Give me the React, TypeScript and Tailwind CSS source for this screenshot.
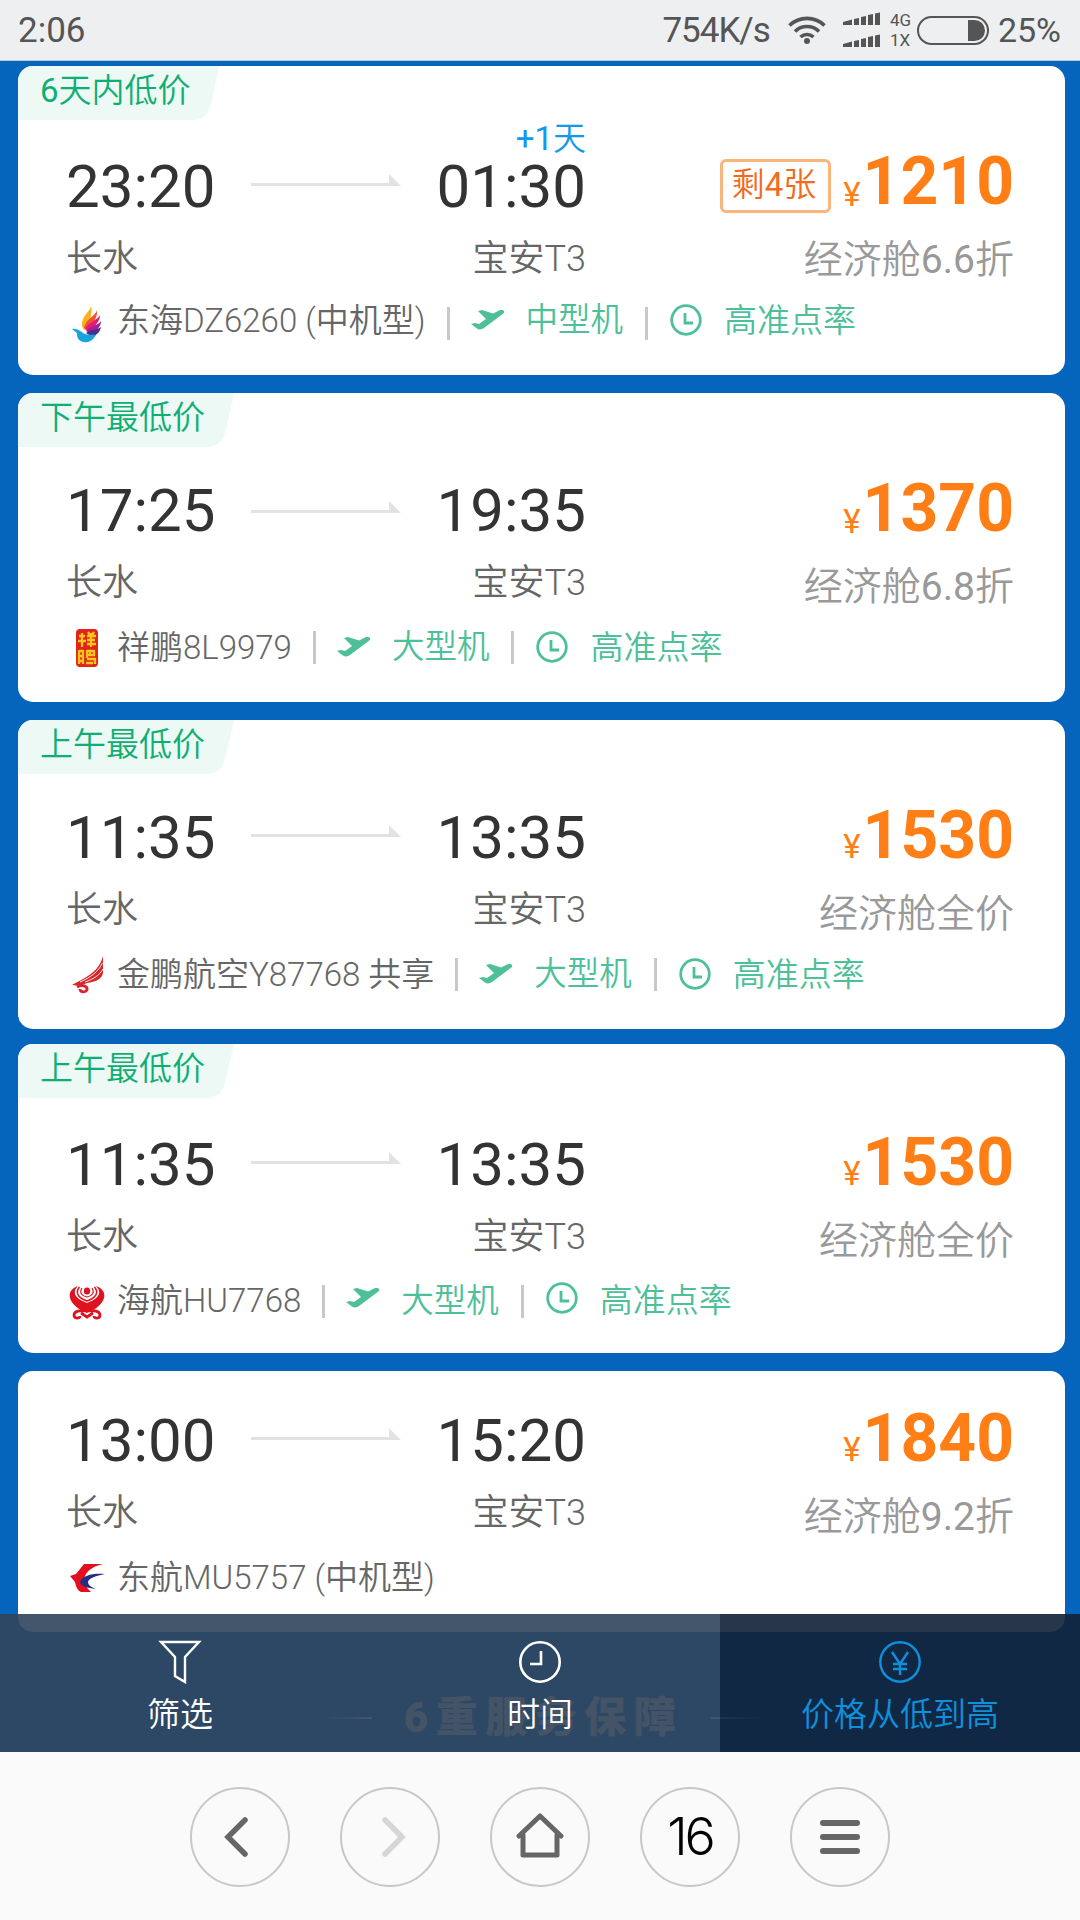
import type { ReactNode } from "react";

type Flight = {
    tag?: string;
    tagWidth?: string;
    depart: string;
    arrive: string;
    nextDay?: boolean;
    left?: string;
    price: string;
    cabin: string;
    flight: string;
    plane?: string;
    logo: ReactNode;
    frame: string;
    body: string;
    timePad: string;
    arrowPad: string;
    pricePad: string;
    yenPad: string;
    textPad: string;
    markPad: string;
};

const DonghaiLogo = () => (
    <svg width="36" height="40" viewBox="0 0 36 40">
        <path d="M22 2c-1 6-10 10-9 20 1 4 4 5 7 3C20 16 24 8 22 2z" fill="#fbb21c" />
        <path d="M28 6c-1 6-12 9-13 18l6 3c2-8 8-13 7-21z" fill="#f0532d" />
        <path d="M31 11c-2 5-13 8-15 14l6 3c2-6 9-9 9-17z" fill="#e5197f" />
        <path d="M32 17c-3 5-12 5-15 10l6 3c3-4 9-6 9-13z" fill="#a81e8c" />
        <path d="M32 23c-4 3-10 2-15 6l6 4c4-2 8-4 9-10z" fill="#4c2d90" />
        <path d="M3 25c5-1 8 2 11 4 6 3 9 1 13 2-3 5-7 8-12 7-7-1-7-6-7-9z" fill="#17a4dc" />
    </svg>
);

const XiangpengLogo = () => (
    <svg width="36" height="40" viewBox="0 0 36 40">
        <rect x="7" y="1" width="22" height="38" rx="4" fill="#e22319" />
        <g stroke="#ffc71c" strokeWidth="2.300" fill="none">
            <path d="M10 8h6M13 5v14M9 13h8M18 8h9M18 12h8M18 16h9M22 5v14M19 4l2 3M25 4l-2 3" />
            <path d="M10 22v14M14 22v14M10 23h4M10 28h5M10 33h5M18 22v8M25 22v6M18 23h7M18 27h8M18 31h8v5M17 35h7M21 22v4" />
        </g>
    </svg>
);

const JinpengLogo = () => (
    <svg width="36" height="40" viewBox="0 0 36 40">
        <path d="M34 1C30 16 20 21 3 30c6 1 11 0 15-2 8-1 16-4 16-11z" fill="#d9262c" />
        <path d="M33.500 8C29 17 22 22 11 27M34 14c-4 7-10 10-18 13" stroke="#fff" strokeWidth="0.900" fill="none" />
        <path d="M8 32c5-3 11-1 10 3-2 3-7 2-7-1" stroke="#d9262c" strokeWidth="2.800" fill="none" />
    </svg>
);

const HainanLogo = () => (
    <svg width="36" height="40" viewBox="0 0 36 40">
        <path d="M9 4C-5 9-1 23 18 31 37 23 41 9 27 4c7 7 2 13-9 17C7 17 2 11 9 4z" fill="#df1220" />
        <g fill="none" stroke="#df1220">
            <path d="M10.500 5c-5 6-1 11 7.500 14 8.500-3 12.500-8 7.500-14" strokeWidth="1.500" />
            <path d="M13 6c-3 5 0 8 5 9 5-1 8-4 5-9" strokeWidth="1.200" />
            <path d="M16 29c-4-1-11 0-11 4 0 4 6 4 6 1M20 29c4-1 11 0 11 4 0 4-6 4-6 1M12 31l6 4 6-4" strokeWidth="2.800" />
        </g>
        <ellipse cx="18" cy="9" rx="3.200" ry="3.600" fill="#df1220" />
    </svg>
);

const EasternLogo = () => (
    <svg width="36" height="40" viewBox="0 0 36 40">
        <path d="M15 6h19c-8 2-15 5-18 12-2 5 0 11 6 16H12c-4-2-5-6-6-10L1 18l6-2z" fill="#e2101c" />
        <path d="M36 16c-12-1-22 1-25 8 1 4 7 6 16 7-5-2-8-4-8-7 1-4 8-6 17-8z" fill="#262c86" />
    </svg>
);

const flights: Flight[] = [
    {
        tag: "6天内低价", tagWidth: "w-[201px]", depart: "23:20", arrive: "01:30", nextDay: true, left: "剩4张",
        price: "1210", cabin: "经济舱6.6折", flight: "东海DZ6260 (中机型)", plane: "中型机", logo: <DonghaiLogo />,
        frame: "h-[309px] mb-[18px]", body: "h-[168px]", timePad: "pt-[31px]", arrowPad: "-mt-[14px]",
        pricePad: "pt-[26px]", yenPad: "mt-[26px]", textPad: "mt-[1px]", markPad: "mt-[7px]",
    },
    {
        tag: "下午最低价", tagWidth: "w-[216px]", depart: "17:25", arrive: "19:35",
        price: "1370", cabin: "经济舱6.8折", flight: "祥鹏8L9979", plane: "大型机", logo: <XiangpengLogo />,
        frame: "h-[309px] mb-[18px]", body: "h-[168px]", timePad: "pt-[28px]", arrowPad: "-mt-[8px]",
        pricePad: "pt-[26px]", yenPad: "mt-[26px]", textPad: "mt-[1px]", markPad: "mt-[1px]",
    },
    {
        tag: "上午最低价", tagWidth: "w-[216px]", depart: "11:35", arrive: "13:35",
        price: "1530", cabin: "经济舱全价", flight: "金鹏航空Y87768 共享", plane: "大型机", logo: <JinpengLogo />,
        frame: "h-[309px] mb-[15px]", body: "h-[168px]", timePad: "pt-[28px]", arrowPad: "-mt-[14px]",
        pricePad: "pt-[26px]", yenPad: "mt-[22px]", textPad: "mt-[1px]", markPad: "mt-[1px]",
    },
    {
        tag: "上午最低价", tagWidth: "w-[216px]", depart: "11:35", arrive: "13:35",
        price: "1530", cabin: "经济舱全价", flight: "海航HU7768", plane: "大型机", logo: <HainanLogo />,
        frame: "h-[309px] mb-[18px]", body: "h-[168px]", timePad: "pt-[31px]", arrowPad: "-mt-[14px]",
        pricePad: "pt-[29px]", yenPad: "mt-[22px]", textPad: "mt-[6px]", markPad: "mt-[7px]",
    },
    {
        depart: "13:00", arrive: "15:20",
        price: "1840", cabin: "经济舱9.2折", flight: "东航MU5757 (中机型)", logo: <EasternLogo />,
        frame: "h-[261px]", body: "h-[174px]", timePad: "pt-[34px]", arrowPad: "-mt-[14px]",
        pricePad: "pt-[32px]", yenPad: "mt-[22px]", textPad: "mt-[1px]", markPad: "mt-[1px]",
    },
];

// digits keep the regular weight next to the thinner Chinese text
const Mixed = ({ text }: { text: string }) => (
    <span className="font-[350]">
        {text.split(/([\d.+]+)/).map((part, i) => (
            i % 2 ? <span key={i} className="font-normal">{part}</span> : part
        ))}
    </span>
);

const Clock = () => (
    <svg width="32" height="32" viewBox="0 0 32 32" fill="none" stroke="#4dbf99" strokeWidth="2.800">
        <circle cx="16" cy="16" r="14.300" />
        <path d="M15 9v10h8" />
    </svg>
);

const Plane = () => (
    <svg width="34" height="20" viewBox="0 0 34 20" fill="#4dbf99">
        <path d="M7 1l4-1 11 3.500 6-3c3-1.500 6 0 5 2.500L13 18c-2 1.500-5 2-7 .5L0 14l4-1 4 1 7-5z" />
    </svg>
);

const Divider = () => <span className="block h-[33px] w-[3px] bg-[#c8c8c8]" />;

function FlightCard({ item }: { item: Flight }) {
    return (
        <div className={`relative overflow-hidden rounded-[15px] bg-white ${item.frame}`}>
            {item.tag && (
                <div className={`relative h-[54px] ${item.tagWidth}`}>
                    <svg className="absolute inset-0 h-full w-full" viewBox="0 0 216 54" preserveAspectRatio="none">
                        <path d="M0 0h216l-9 39q-4 15-19 15H0z" fill="#ecf9f5" />
                    </svg>
                    <span className="relative block pl-[22px] text-[33px] leading-[50px] text-[#0fae72]">
                        <Mixed text={item.tag} />
                    </span>
                </div>
            )}

            <div className={`flex justify-between pr-[51px] pl-[48px] ${item.body}`}>
                <div className={`w-[520px] ${item.timePad}`}>
                    <div className="relative flex h-[72px] items-center justify-between text-[60px] leading-[72px] text-[#333]">
                        {item.nextDay && (
                            <span className="absolute -top-[30px] right-0 text-[33px] leading-[36px] text-[#1299ec]">
                                <Mixed text="+1天" />
                            </span>
                        )}
                        <span>{item.depart}</span>
                        <svg width="150" height="12" viewBox="0 0 150 12" fill="#e2e2e2" className={item.arrowPad}>
                            <path d="M0 9h138V0l12 12H0z" />
                        </svg>
                        <span>{item.arrive}</span>
                    </div>
                    <div className="flex justify-between pt-[14px] text-[36px] leading-[44px] font-[350] text-[#666]">
                        <span>长水</span>
                        <span>宝安T3</span>
                    </div>
                </div>

                <div className={`text-right ${item.pricePad}`}>
                    <div className="flex h-[72px] items-center justify-end">
                        {item.left && (
                            <span className="mt-[8px] mr-[12px] h-[54px] rounded-[6px] border-3 border-[#f9b57c] pr-[12px] pl-[9px] text-[33px] leading-[46px] text-[#f26a1b]">
                                <Mixed text={item.left} />
                            </span>
                        )}
                        <span className={`mr-[2px] text-[33px] leading-[40px] text-[#ff7e15] ${item.yenPad}`}>¥</span>
                        <span className="text-[66px] leading-[72px] font-bold text-[#ff7e15]">{item.price}</span>
                    </div>
                    <div className="pt-[18px] text-[39px] leading-[48px] text-[#999]">
                        <Mixed text={item.cabin} />
                    </div>
                </div>
            </div>

            <div className="flex h-[64px] items-center pl-[51px] text-[33px] text-[#4dbf99]">
                <span className={item.markPad}>{item.logo}</span>
                <span className={`ml-[12px] font-[350] text-[#666] ${item.textPad}`}>{item.flight}</span>
                {item.plane && (
                    <div className="flex items-center pl-[21px]">
                        <span className={item.markPad}><Divider /></span>
                        <span className="mr-[21px] ml-[21px]"><Plane /></span>
                        <span className={`text-[32.500px] font-[350] ${item.textPad}`}>{item.plane}</span>
                        <span className={`mr-[22px] ml-[22px] ${item.markPad}`}><Divider /></span>
                        <Clock />
                        <span className={`ml-[22px] font-[350] ${item.textPad}`}>高准点率</span>
                    </div>
                )}
            </div>
        </div>
    );
}

function StatusBar() {
    return (
        <header className="flex h-[61px] items-center justify-between border-b border-[#b9c8dc] bg-[#edeff1] pr-[19px] pl-[18px] text-[34px] text-[#555]">
            <span className="pt-[2px] text-[35px]">2:06</span>
            <div className="flex items-center">
                <span className="pt-[2px] text-[35px] tracking-[-1px]">754K/s</span>
                <svg className="ml-[18px]" width="38" height="28" viewBox="0 0 38 28" fill="none" stroke="#555" strokeWidth="3.600">
                    <path d="M1.500 9.500a25 25 0 0 1 35 0M7 15.500a17 17 0 0 1 24 0M12.500 21a9.500 9.500 0 0 1 13 0" />
                    <circle cx="19" cy="25" r="3" fill="#555" stroke="none" />
                </svg>
                <svg className="ml-[17px]" width="38" height="36" viewBox="0 0 38 36" fill="#555">
                    <path d="M0 10l9-2.500V13H0zM11 7l5-1v7h-5zM18 5l5-1v9h-5zM25 3l5-1v11h-5zM32 1.500l5-1V13h-5z" />
                    <path d="M0 32l9-2.500V35H0zM11 29l5-1v7h-5zM18 27l5-1v9h-5zM25 25l5-1v11h-5zM32 23.500l5-1V35h-5z" />
                </svg>
                <div className="ml-[9px] w-[22px] text-[17px] leading-[20px]">
                    <div>4G</div>
                    <div>1X</div>
                </div>
                <div className="ml-[5px] flex h-[29px] w-[72px] justify-end rounded-full border-2 border-[#555] p-[2px]">
                    <span className="h-full w-[17px] rounded-r-full bg-[#555]" />
                </div>
                <span className="ml-[9px]">25%</span>
            </div>
        </header>
    );
}

function FilterBar() {
    return (
        <div className="absolute inset-x-0 top-[1614px] grid h-[138px] grid-cols-[1fr_1fr_1fr] text-center text-[33px] leading-[40px] text-white">
            <div className="flex flex-col items-center bg-[#31455c]/91 pt-[26px]">
                <svg width="44" height="44" viewBox="0 0 44 44" fill="none" stroke="currentColor" strokeWidth="2.400">
                    <path d="M3 2h38L27 17v25l-10-6V17z" />
                </svg>
                <span className="mt-[11px] font-[350]">筛选</span>
            </div>
            <div className="flex flex-col items-center bg-[#31455c]/91 pt-[26px]">
                <svg width="44" height="44" viewBox="0 0 44 44" fill="none" stroke="currentColor" strokeWidth="2.600">
                    <circle cx="22" cy="22" r="19.700" />
                    <path d="M23 11v13H12" />
                </svg>
                <span className="mt-[11px] font-[350]">时间</span>
            </div>
            <div className="flex flex-col items-center bg-[#132238]/91 pt-[26px] text-[#1090dc]">
                <svg width="44" height="44" viewBox="0 0 44 44" fill="none" stroke="currentColor" strokeWidth="2.400">
                    <circle cx="22" cy="22" r="19.700" />
                    <path d="M14 12l8 12 8-12M22 24v11M15 24h14M15 29h14" />
                </svg>
                <span className="mt-[11px] font-[350]">价格从低到高</span>
            </div>
        </div>
    );
}

const NavButton = ({ children }: { children: ReactNode }) => (
    <button className="flex h-[100px] w-[100px] items-center justify-center rounded-full border-2 border-[#c8c8c8]">
        {children}
    </button>
);

function BrowserNav() {
    return (
        <nav className="flex h-[168px] justify-center gap-[50px] bg-[#fafafa] pt-[35px]">
            <NavButton>
                <svg width="48" height="48" viewBox="0 0 48 48" fill="none" stroke="#666" strokeWidth="5.500" strokeLinecap="round">
                    <path d="M29 7L12 24l17 17" />
                </svg>
            </NavButton>
            <NavButton>
                <svg width="48" height="48" viewBox="0 0 48 48" fill="none" stroke="#d6d6d6" strokeWidth="5.500" strokeLinecap="round">
                    <path d="M19 7l17 17-17 17" />
                </svg>
            </NavButton>
            <NavButton>
                <svg width="48" height="48" viewBox="0 0 48 48" fill="none" stroke="#666" strokeWidth="5" strokeLinecap="round" strokeLinejoin="round">
                    <path d="M3 23L24 3l21 20M7 22v20h34V22" />
                </svg>
            </NavButton>
            <NavButton>
                <span className="pb-[1px] font-['Inter'] text-[52px] font-[350] tracking-[-3px] text-black">16</span>
            </NavButton>
            <NavButton>
                <svg width="48" height="48" viewBox="0 0 48 48" stroke="#666" strokeWidth="6" strokeLinecap="round">
                    <path d="M7 10h34M7 24h34M7 38h34" />
                </svg>
            </NavButton>
        </nav>
    );
}

export default function App() {
    return (
        <div className="relative h-[1920px] w-[1080px] overflow-hidden bg-[#0565bd] font-['Roboto','Noto_Sans_CJK_SC',sans-serif]">
            <StatusBar />
            <main className="h-[1691px] overflow-hidden pt-[5px] pr-[15px] pl-[18px]">
                {flights.map((item, i) => (
                    <FlightCard key={i} item={item} />
                ))}
                <div className="flex items-center justify-center pt-[61px]">
                    <span className="h-[2px] w-[50px] bg-linear-to-r from-white/0 to-white" />
                    <span className="mr-[28px] ml-[32px] text-[42px] leading-[50px] font-black tracking-[7.500px] text-[#ffd9c4]">6重服务保障</span>
                    <span className="h-[2px] w-[50px] bg-linear-to-l from-white/0 to-white" />
                </div>
            </main>
            <FilterBar />
            <BrowserNav />
        </div>
    );
}
